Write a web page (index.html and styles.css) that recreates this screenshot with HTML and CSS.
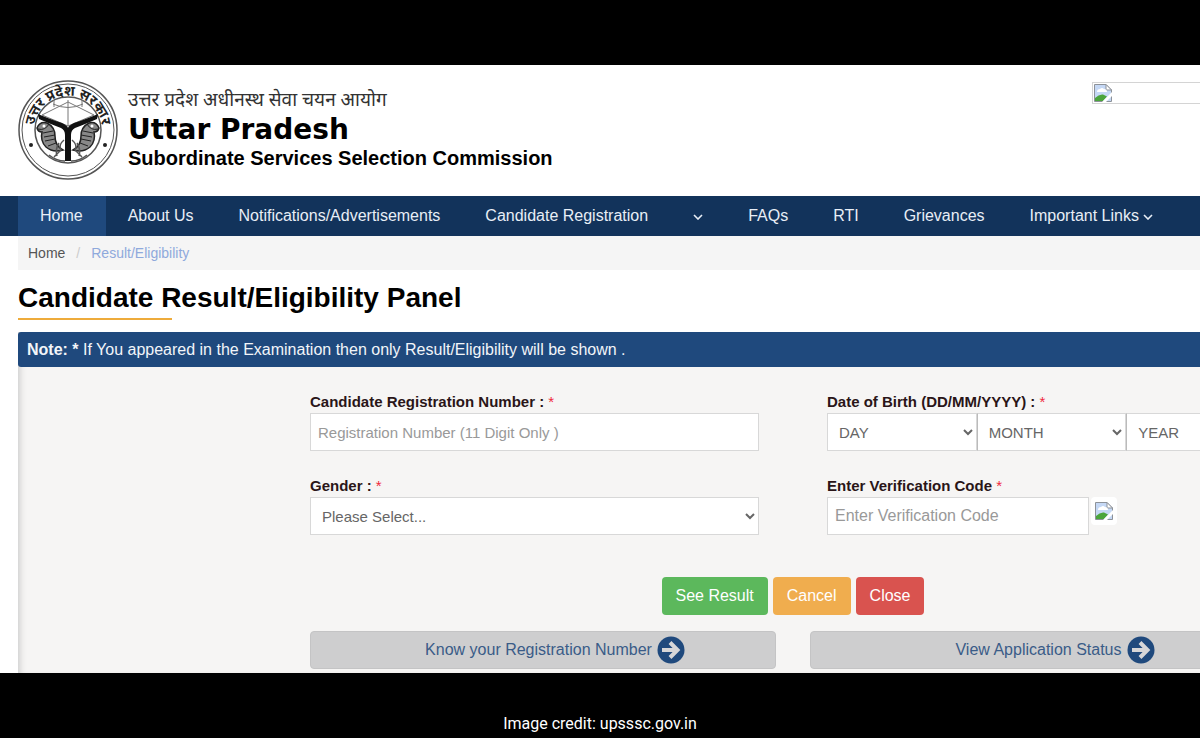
FILE: index.html
```html
<!DOCTYPE html>
<html lang="en">
<head>
    <meta charset="UTF-8">
    <meta name="viewport" content="width=device-width, initial-scale=1.0">
    <title>Candidate Result/Eligibility Panel</title>
    <link rel="stylesheet" href="styles.css">
</head>
<body>
    <!-- shared icons -->
    <svg class="sprite" aria-hidden="true">
        <symbol id="broken" viewBox="0 0 18 18">
            <path d="M.5 .5h11.500l5.500 5.500v11.500H.5z" fill="#c5d8f5" stroke="#8d9299"/>
            <path d="M12 .5v5.500h5.500z" fill="#fff" stroke="#8d9299"/>
            <path d="M3 8q0-3 3-3 2-2 4 0 3 0 3 3z" fill="#fff"/>
            <path d="M1 17v-3q4-4 8-3.500l4 2-4 4.500z" fill="#4ba53c"/>
            <path d="M8 18L18 8v4l-6 6z" fill="#fff"/>
        </symbol>
        <symbol id="arrow" viewBox="0 0 28 28">
            <circle cx="14" cy="14" r="13.500" fill="#1f497d"/>
            <path d="M5 14h15M13 6.500l7.500 7.500-7.500 7.500" fill="none" stroke="#d6d6d8" stroke-width="4"/>
        </symbol>
        <symbol id="chevron" viewBox="0 0 10 6">
            <path d="M1 1l4 4 4-4" fill="none" stroke="currentColor" stroke-width="1.600"/>
        </symbol>
    </svg>

    <div class="site">
        <header class="header">
            <svg class="emblem" viewBox="0 0 100 100" role="img" aria-label="Government emblem">
                <defs>
                    <path id="ring" d="M17 58A34 34 0 1 1 83 58"/>
                    <g id="fish">
                        <path d="M19 48q3-7 10-5 8 4 8 13 0 10 8 14-10 3-17-3-6-6-4-15-4 0-5-4z" fill="#888" stroke="#222" stroke-width="1.500"/>
                        <path d="M20 49q7 2 11-5M25 53l10-2M26 57l11-2M27 61l10-2M30 66l8-3" fill="none" stroke="#222"/>
                        <circle cx="26" cy="46" r="1.500" fill="#fff"/>
                        <path d="M46 60q-6 5-3 10l-7 7M41 63q-4 6-2 13M31 75q7 6 16 6" fill="none" stroke="#555" stroke-width="1.500"/>
                    </g>
                </defs>
                <circle cx="50" cy="50" r="49" fill="#fff" stroke="#555" stroke-width="1.500"/>
                <circle cx="50" cy="50" r="46" fill="none" stroke="#555"/>
                <circle cx="50" cy="50" r="33" fill="none" stroke="#555" stroke-width="1.500"/>
                <path d="M50 20v26M24 35l26-13 26 13-26 11zM35 24q15 7 30 0M36 20v7M64 20v7" fill="none" stroke="#777"/>
                <use href="#fish"/>
                <use href="#fish" transform="matrix(-1 0 0 1 100 0)"/>
                <path d="M20 34q14 6 24 9 6 3 6 5 0-2 6-5 10-3 24-9l-1 5q-14 6-22 9-4 2-4 7v26h-6V55q0-5-4-7-8-3-22-9z" fill="#111"/>
                <text class="emblem-text"><textPath href="#ring" startOffset="50%" text-anchor="middle">उत्तर प्रदेश सरकार</textPath></text>
                <circle cx="13" cy="65" r="2" fill="#222"/>
                <circle cx="87" cy="65" r="2" fill="#222"/>
            </svg>
            <div class="brand">
                <p class="brand-hindi" lang="hi">उत्तर प्रदेश अधीनस्थ सेवा चयन आयोग</p>
                <p class="brand-name">Uttar Pradesh</p>
                <p class="brand-sub">Subordinate Services Selection Commission</p>
            </div>
            <div class="banner"><svg class="broken"><use href="#broken"/></svg></div>
        </header>

        <nav class="nav">
            <a class="active" href="#">Home</a>
            <a href="#">About Us</a>
            <a href="#">Notifications/Advertisements</a>
            <a href="#">Candidate Registration</a>
            <a href="#" aria-label="More"><svg class="chevron"><use href="#chevron"/></svg></a>
            <a href="#">FAQs</a>
            <a href="#">RTI</a>
            <a href="#">Grievances</a>
            <a href="#">Important Links <svg class="chevron"><use href="#chevron"/></svg></a>
        </nav>

        <main class="main">
            <div class="breadcrumb">
                <a href="#">Home</a>
                <span class="slash">/</span>
                <span class="current">Result/Eligibility</span>
            </div>
            <h1>Candidate Result/Eligibility Panel</h1>

            <div class="panel">
                <p class="note"><b>Note: *</b> If You appeared in the Examination then only Result/Eligibility will be shown .</p>
                <form class="form">
                    <div class="fields">
                        <div class="field">
                            <label for="regNo">Candidate Registration Number : <span class="req">*</span></label>
                            <input type="text" id="regNo" placeholder="Registration Number (11 Digit Only )">
                        </div>
                        <div class="field">
                            <label for="day">Date of Birth (DD/MM/YYYY) : <span class="req">*</span></label>
                            <div class="dob">
                                <select id="day"><option>DAY</option></select>
                                <select aria-label="Month"><option>MONTH</option></select>
                                <select aria-label="Year"><option>YEAR</option></select>
                            </div>
                        </div>
                        <div class="field">
                            <label for="gender">Gender : <span class="req">*</span></label>
                            <select id="gender"><option>Please Select...</option></select>
                        </div>
                        <div class="field">
                            <label for="code">Enter Verification Code <span class="req">*</span></label>
                            <div class="captcha">
                                <input type="text" id="code" placeholder="Enter Verification Code">
                                <span class="captcha-img"><svg class="broken"><use href="#broken"/></svg></span>
                            </div>
                        </div>
                    </div>
                    <div class="buttons">
                        <button class="btn green" type="button">See Result</button>
                        <button class="btn orange" type="button">Cancel</button>
                        <button class="btn red" type="button">Close</button>
                    </div>
                    <div class="links">
                        <a href="#">Know your Registration Number <svg class="arrow"><use href="#arrow"/></svg></a>
                        <a href="#">View Application Status <svg class="arrow"><use href="#arrow"/></svg></a>
                    </div>
                </form>
            </div>
        </main>
    </div>
    <p class="credit">Image credit: upsssc.gov.in</p>
</body>
</html>
```
FILE: styles.css
```css
* {
    box-sizing: border-box;
}
body {
    font-family: "Liberation Sans", Arial, sans-serif;
    font-size: 16px;
    margin: 0;
    padding-top: 65px;
    background-color: #000;
}
p, h1 {
    margin: 0;
}
a {
    text-decoration: none;
}
.sprite {
    display: none;
}
.site {
    background: #fff;
    overflow: hidden;
}

/* header */
.header {
    display: flex;
    align-items: flex-start;
    gap: 10px;
    padding: 15px 0 16px 18px;
}
.emblem {
    width: 100px;
    height: 100px;
    flex: none;
}
.emblem-text {
    font-family: "Noto Sans Devanagari", "Noto Sans", sans-serif;
    font-size: 14px;
    font-weight: bold;
    fill: #222;
}
.brand {
    flex: 1;
    padding-top: 9px;
    color: #000;
    white-space: nowrap;
}
.brand-hindi {
    font-family: "Noto Sans Devanagari", "Noto Sans", sans-serif;
    font-size: 19px;
    line-height: 26px;
    color: #333;
}
.brand-name {
    font-family: "DejaVu Sans", sans-serif;
    font-size: 28px;
    font-weight: bold;
    line-height: 30px;
}
.brand-sub {
    font-size: 20px;
    font-weight: bold;
    line-height: 26px;
}
.banner {
    width: 108px;
    margin-top: 2px;
    padding: 1px;
    border: 1px solid #d4d4d4;
    border-right: 0;
    line-height: 0;
}
.broken {
    width: 18px;
    height: 18px;
}

/* navigation */
.nav {
    display: flex;
    padding-left: 18px;
    background: #12335b;
}
.nav a {
    padding: 0 23px 0 22px;
    color: #e8eef6;
    font-size: 16px;
    line-height: 40px;
    white-space: nowrap;
}
.nav .active {
    background: #1f497d;
}
.chevron {
    width: 10px;
    height: 6px;
    vertical-align: middle;
}

/* page content */
.main {
    padding-left: 18px;
}
.breadcrumb {
    display: flex;
    gap: 11px;
    padding-left: 10px;
    background: #f5f5f5;
    font-size: 14px;
    line-height: 34px;
}
.breadcrumb a {
    color: #555;
}
.slash {
    color: #ccc;
}
.current {
    color: #8fa9dc;
}
h1 {
    padding-top: 8px;
    font-size: 28px;
    line-height: 40px;
    color: #000;
}
h1::after {
    content: "";
    display: block;
    width: 154px;
    height: 2px;
    background: #eeab3b;
}
.panel {
    margin-top: 12px;
    background: #f6f5f4;
    box-shadow: inset 6px 0 6px -4px #ccc;
}
.note {
    padding-left: 9px;
    background: #1f497d;
    border-radius: 3px 0 0 3px;
    color: #f2f5f9;
    font-size: 16px;
    line-height: 35px;
}

/* the form is wider than the panel, its right end is cut off */
.form {
    margin-left: 292px;
    margin-right: -76px;
    padding: 24px 0 4px;
}
.fields {
    display: grid;
    grid-template-columns: 1fr 1fr;
    gap: 24px 68px;
}
.field label {
    display: block;
    color: #2a1518;
    font-size: 15px;
    font-weight: bold;
    line-height: 22px;
}
.req {
    color: #f0283c;
    font-weight: normal;
}
.field input, .field select {
    display: block;
    width: 100%;
    height: 38px;
    padding: 0 7px;
    background-color: #fff;
    border: 1px solid #d8d8d8;
    border-radius: 0;
    color: #666;
    font-family: inherit;
    font-size: 15px;
}
.field input::placeholder {
    color: #999;
}
.dob, .captcha {
    display: flex;
}
.dob select + select {
    border-left-color: #bbb;
}
.captcha {
    gap: 2px;
}
.field .captcha input {
    width: 262px;
    font-size: 16px;
}
.captcha-img {
    height: 28px;
    padding: 5px 4px;
    background: #fff;
    border-radius: 4px;
    line-height: 0;
}
.buttons {
    display: flex;
    justify-content: center;
    gap: 5px;
    margin-top: 42px;
}
.btn {
    height: 38px;
    padding: 0 14px;
    border: none;
    border-radius: 4px;
    color: #fff;
    font-family: inherit;
    font-size: 16px;
    cursor: pointer;
}
.green {
    background: #5cb85c;
}
.orange {
    background: #f0ad4e;
}
.red {
    background: #d9534f;
}
.links {
    display: grid;
    grid-template-columns: 1fr 1fr;
    gap: 34px;
    margin-top: 16px;
}
.links a {
    display: flex;
    justify-content: center;
    align-items: center;
    gap: 5px;
    height: 38px;
    padding-left: 24px;
    background: #cececf;
    border: 1px solid #c4c4c5;
    border-radius: 4px;
    color: #3a5c88;
    font-size: 16px;
}
.arrow {
    width: 28px;
    height: 28px;
}

.credit {
    padding: 40px 0 3px;
    color: #fff;
    font-family: Roboto, sans-serif;
    font-size: 16px;
    line-height: 22px;
    text-align: center;
}
```
